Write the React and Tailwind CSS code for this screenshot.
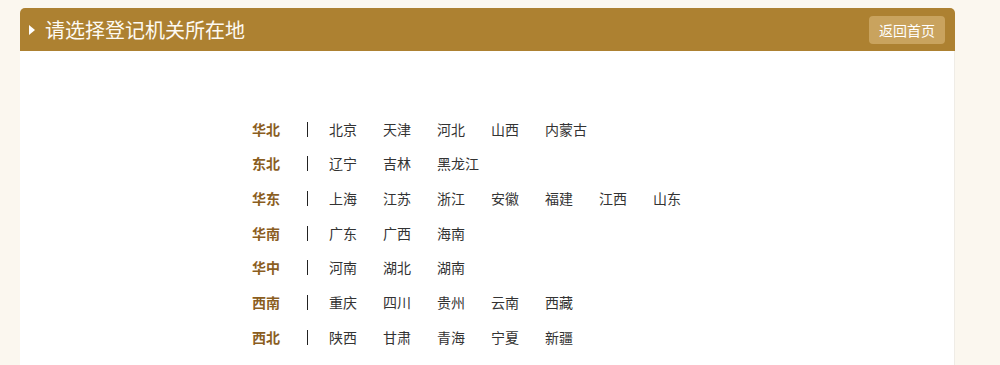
import React from "react";

const regions = [
  { name: "华北", cities: ["北京", "天津", "河北", "山西", "内蒙古"] },
  { name: "东北", cities: ["辽宁", "吉林", "黑龙江"] },
  { name: "华东", cities: ["上海", "江苏", "浙江", "安徽", "福建", "江西", "山东"] },
  { name: "华南", cities: ["广东", "广西", "海南"] },
  { name: "华中", cities: ["河南", "湖北", "湖南"] },
  { name: "西南", cities: ["重庆", "四川", "贵州", "云南", "西藏"] },
  { name: "西北", cities: ["陕西", "甘肃", "青海", "宁夏", "新疆"] },
];

const App = () => {
  return (
    <div
      className="min-h-[365px] bg-[#fbf7ef] pt-2 px-5"
      style={{ fontFamily: '"Noto Sans CJK SC", "Microsoft YaHei", sans-serif' }}
    >
      <div className="w-[935px]">
        {/* 标题栏 */}
        <div className="h-[43px] bg-[#ad8131] rounded-t-[5px] flex items-center justify-between pl-[9px] pr-[10px]">
          <div className="flex items-center">
            <span className="w-0 h-0 border-y-[5px] border-y-transparent border-l-[6px] border-l-white mr-[10px]" />
            <h1 className="text-[20px] leading-none text-[#fdfaf3]">请选择登记机关所在地</h1>
          </div>
          <button className="h-[28px] w-[76px] bg-[#c9a35e] rounded-[4px] text-[14px] text-white leading-none">
            返回首页
          </button>
        </div>

        {/* 地区列表 */}
        <div className="bg-white border-r border-[#efece6] pt-[61px] pb-4 pl-[232px]">
          {regions.map((r) => (
            <div key={r.name} className="flex items-center h-[34.67px] text-[14px]">
              <span className="w-[55px] font-bold text-[#8b5e1f]">{r.name}</span>
              <span className="w-px h-[15px] bg-[#222]" />
              <div className="flex ml-[21px]">
                {r.cities.map((c) => (
                  <span key={c} className="w-[54px] text-[#333] whitespace-nowrap">
                    {c}
                  </span>
                ))}
              </div>
            </div>
          ))}
        </div>
      </div>
    </div>
  );
};

export default App;
